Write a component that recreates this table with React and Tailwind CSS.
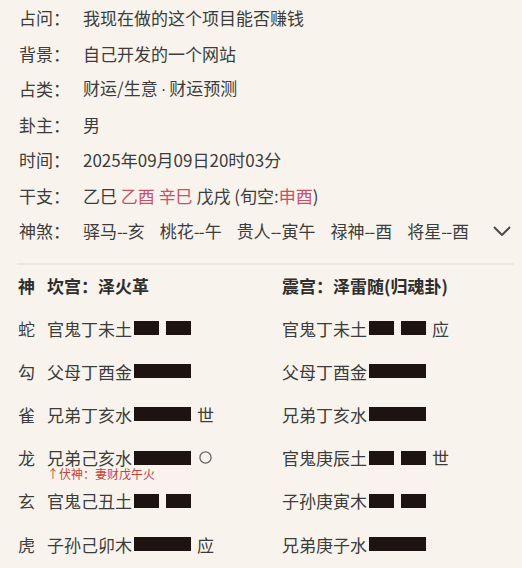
import React from 'react';

const FONT = "font-['Noto_Sans_CJK_SC','Noto_Sans',sans-serif]";

const info = [
  { label: '占问：', value: '我现在做的这个项目能否赚钱' },
  { label: '背景：', value: '自己开发的一个网站' },
  {
    label: '占类：',
    value: (
      <>
        财运/生意<span className="mx-[3px] font-['Liberation_Sans',sans-serif]">·</span>财运预测
      </>
    ),
  },
  { label: '卦主：', value: '男' },
  { label: '时间：', value: '2025年09月09日20时03分' },
];

const shensha = [
  ['驿马', '亥'],
  ['桃花', '午'],
  ['贵人', '寅午'],
  ['禄神', '酉'],
  ['将星', '酉'],
];

const leftLines = [
  { god: '蛇', text: '官鬼丁未土', yin: true },
  { god: '勾', text: '父母丁酉金' },
  { god: '雀', text: '兄弟丁亥水', mark: '世' },
  { god: '龙', text: '兄弟己亥水', circle: true, fushen: '↑伏神：妻财戊午火' },
  { god: '玄', text: '官鬼己丑土', yin: true },
  { god: '虎', text: '子孙己卯木', mark: '应' },
];

const rightLines = [
  { text: '官鬼丁未土', yin: true, mark: '应' },
  { text: '父母丁酉金' },
  { text: '兄弟丁亥水' },
  { text: '官鬼庚辰土', yin: true, mark: '世' },
  { text: '子孙庚寅木', yin: true },
  { text: '兄弟庚子水' },
];

function Bar({ yin }) {
  if (yin) {
    return (
      <div className="ml-[2px] flex gap-[7px]">
        <div className="h-[14px] w-[25px] bg-[#1d1412]" />
        <div className="h-[14px] w-[25px] bg-[#1d1412]" />
      </div>
    );
  }
  return <div className="ml-[2px] h-[14px] w-[57px] bg-[#1d1412]" />;
}

function Line({ line }) {
  return (
    <div className="flex h-[43.2px] items-center">
      {line.god ? <span className="w-[29px] leading-none">{line.god}</span> : null}
      <span className="relative leading-none">
        {line.text}
        {line.fushen ? (
          <span className="absolute left-0 top-full mt-[2px] whitespace-nowrap text-[12px] leading-none text-[#c8403d]">
            {line.fushen}
          </span>
        ) : null}
      </span>
      <Bar yin={line.yin} />
      {line.mark ? <span className="ml-[6px] leading-none">{line.mark}</span> : null}
      {line.circle ? (
        <svg className="ml-[8px]" width="13" height="13" viewBox="0 0 13 13">
          <circle cx="6.5" cy="6.5" r="5.6" fill="none" stroke="#666" strokeWidth="1.3" />
        </svg>
      ) : null}
    </div>
  );
}

export default function App() {
  return (
    <div className={`min-h-[568px] w-full bg-[#f8f4ed] text-[17px] text-[#3c3c3c] ${FONT}`}>
      <div className="pl-[19px]">
        {info.map((r) => (
          <div key={r.label} className="flex h-[35.5px] items-center">
            <span className="w-[64px] leading-none">{r.label}</span>
            <span className="leading-none">{r.value}</span>
          </div>
        ))}
        <div className="flex h-[35.5px] items-center">
          <span className="w-[64px] leading-none">干支：</span>
          <span className="whitespace-pre leading-none">
            乙巳 <span className="text-[#c9506a]">乙酉</span> <span className="text-[#c9506a]">辛巳</span> 戊戌 (旬空:
            <span className="text-[#c9506a]">申酉</span>)
          </span>
        </div>
        <div className="flex h-[35.5px] items-center justify-between pr-[11px]">
          <div className="flex items-center">
            <span className="w-[64px] leading-none">神煞：</span>
            <div className="flex gap-[15px] leading-none">
              {shensha.map(([a, b]) => (
                <span key={a}>
                  {a}
                  <span className="tracking-[-1px]">--</span>
                  <span className="ml-[1px]">{b}</span>
                </span>
              ))}
            </div>
          </div>
          <svg width="18" height="10" viewBox="0 0 18 10">
            <polyline points="1,1 9,9 17,1" fill="none" stroke="#4a4a4a" strokeWidth="2" />
          </svg>
        </div>
      </div>

      <div className="ml-[17px] mt-[14px] h-[2px] w-[497px] bg-[#ece7df]" />

      <div className="grid grid-cols-[264px_1fr] pl-[18px]">
        <div>
          <div className="flex h-[42px] items-center font-bold text-[#2e2e2e]">
            <span className="w-[29px] leading-none">神</span>
            <span className="leading-none">坎宫：泽火革</span>
          </div>
          {leftLines.map((l) => (
            <Line key={l.god} line={l} />
          ))}
        </div>
        <div>
          <div className="flex h-[42px] items-center font-bold text-[#2e2e2e]">
            <span className="leading-none">震宫：泽雷随(归魂卦)</span>
          </div>
          {rightLines.map((l, i) => (
            <Line key={i} line={l} />
          ))}
        </div>
      </div>
    </div>
  );
}
